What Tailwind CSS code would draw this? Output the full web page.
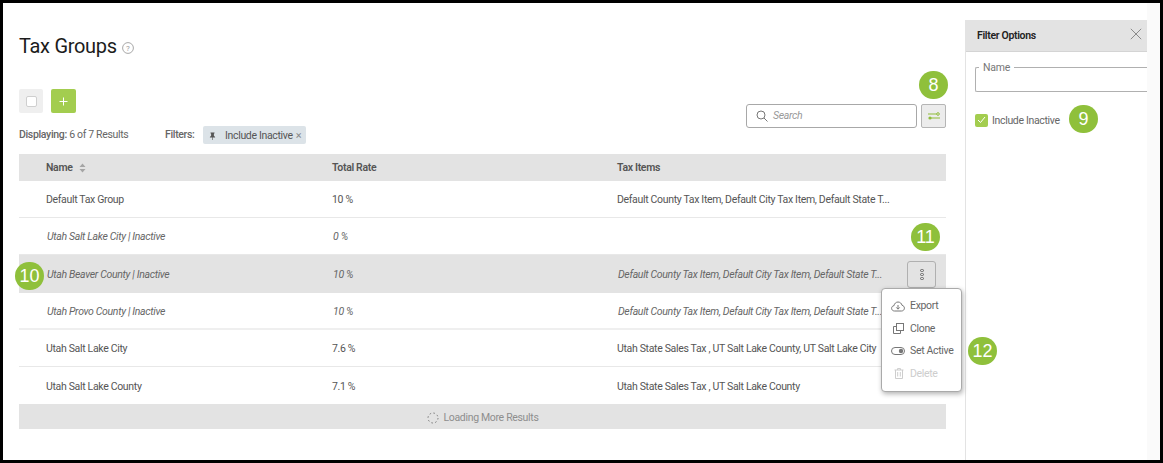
<!DOCTYPE html>
<html>
<head>
<meta charset="utf-8">
<script src="https://cdn.jsdelivr.net/npm/@tailwindcss/browser@4"></script>
</head>
<body class="m-0 bg-black font-['Roboto',sans-serif]">
<div class="relative w-[1163px] h-[463px] overflow-hidden bg-black pt-[3px] pl-[3px] pr-[3px] pb-[3px]">
  <div class="flex h-[457px] bg-white">
    <!-- main -->
    <div class="w-[962px] shrink-0 pl-[16px] pr-[19px]">
      <div class="flex items-center h-[28px] mt-[29px] gap-[5px]">
        <h1 class="text-[20px] leading-[28px] text-[#1c1c1c] tracking-[-0.3px]">Tax Groups</h1>
        <svg class="mt-[3px]" width="12" height="12" viewBox="0 0 12 12" fill="none"><circle cx="6" cy="6" r="5.4" stroke="#a8a8a8"/><text x="6" y="8.8" text-anchor="middle" font-size="8" fill="#999" font-family="Roboto">?</text></svg>
      </div>
      <div class="flex justify-between items-start mt-[29px]">
        <div>
          <div class="flex items-center gap-[8px]">
            <div class="w-[24px] h-[24px] rounded-[2px] bg-[#efefef] flex items-center justify-center"><div class="w-[11px] h-[11px] bg-white border border-[#cfcfcf] rounded-[2px]"></div></div>
            <div class="w-[25px] h-[24px] rounded-[2px] bg-[#a3cd4f] flex items-center justify-center">
              <svg width="9" height="9" viewBox="0 0 9 9"><path d="M4.5 0.5v8M0.5 4.5h8" stroke="#fff" stroke-width="1"/></svg>
            </div>
          </div>
          <div class="flex items-center h-[18px] mt-[13px] text-[10.5px] tracking-[-0.33px] text-[#666]">
            <span class="w-[146px]"><span class="font-medium">Displaying:</span> 6 of 7 Results</span>
            <span class="w-[38px] font-medium">Filters:</span>
            <span class="flex items-center h-[18px] w-[103px] pl-[6px] pt-[1px] rounded-[2px] bg-[#dce3e8] text-[#555]">
              <svg width="7" height="8" viewBox="0 0 7 8" class="mr-[9px]"><path d="M1.5 0.5h4v0.8l-0.6 0.4v2l1.2 1.2v0.6H3.8V8H3.2V5.5H0.9v-0.6l1.2-1.2v-2l-0.6-0.4z" fill="#555"/></svg>
              Include Inactive
              <span class="ml-[3px] text-[#888] text-[11px] leading-none">×</span>
            </span>
          </div>
        </div>
        <div class="flex gap-[4px] items-center mt-[15px]">
          <div class="flex items-center w-[171px] h-[24px] border border-[#a8a8a8] rounded-[3px] pl-[9px] text-[10.5px] tracking-[-0.33px] italic text-[#999] bg-white">
            <svg class="mr-[5px]" width="12" height="12" viewBox="0 0 12 12" fill="none"><circle cx="5" cy="5" r="4" stroke="#777"/><path d="M8 8l3.5 3.5" stroke="#777"/></svg>
            Search
          </div>
          <div class="w-[25px] h-[24px] border border-[#b5b5b5] rounded-[2px] bg-[#ececec] flex items-center justify-center">
            <svg width="12" height="8" viewBox="0 0 12 8" fill="none"><path d="M0 2h9" stroke="#8fbc3a"/><circle cx="10" cy="2" r="1.3" stroke="#8fbc3a" fill="#ececec"/><path d="M3 6h9" stroke="#8fbc3a"/><circle cx="2" cy="6" r="1.6" fill="#8fbc3a"/></svg>
          </div>
        </div>
      </div>
      <!-- table -->
      <div class="mt-[10px] text-[10.5px] tracking-[-0.33px] text-[#555]">
        <div class="flex items-center h-[27px] pt-[1px] bg-[#e3e3e3] font-semibold text-[#555]">
          <div class="w-[313px] pl-[27px] flex items-center gap-[6px]">Name
            <svg width="7" height="10" viewBox="0 0 7 10"><path d="M3.5 0.5L6.5 4H0.5zM3.5 9.5L0.5 6h6z" fill="#a5a5a5"/></svg>
          </div>
          <div class="w-[285px]">Total Rate</div>
          <div>Tax Items</div>
        </div>
        <div class="flex items-center h-[37px] pt-[1px] border-b border-[#e8e8e8]">
          <div class="w-[313px] pl-[27px]">Default Tax Group</div><div class="w-[285px]">10 %</div><div>Default County Tax Item, Default City Tax Item, Default State T...</div>
        </div>
        <div class="flex items-center h-[37px] pt-[1px] border-b border-[#e8e8e8] italic text-[#666]">
          <div class="w-[313px] pl-[28px]">Utah Salt Lake City | Inactive</div><div class="w-[285px] pl-[1px]">0 %</div><div></div>
        </div>
        <div class="flex items-center h-[38px] pt-[1px] bg-[#e3e3e3] italic text-[#666]">
          <div class="w-[313px] pl-[28px]">Utah Beaver County | Inactive</div><div class="w-[285px] pl-[1px]">10 %</div><div class="pl-[1px]">Default County Tax Item, Default City Tax Item, Default State T...</div>
        </div>
        <div class="flex items-center h-[37px] pt-[2px] border-b-2 border-[#efefef] italic text-[#666]">
          <div class="w-[313px] pl-[28px]">Utah Provo County | Inactive</div><div class="w-[285px] pl-[1px]">10 %</div><div class="pl-[1px]">Default County Tax Item, Default City Tax Item, Default State T...</div>
        </div>
        <div class="flex items-center h-[37px] pt-[2px] border-b border-[#e8e8e8]">
          <div class="w-[313px] pl-[27px]">Utah Salt Lake City</div><div class="w-[285px]">7.6 %</div><div>Utah State Sales Tax , UT Salt Lake County, UT Salt Lake City</div>
        </div>
        <div class="flex items-center h-[37px] pt-[2px]">
          <div class="w-[313px] pl-[27px]">Utah Salt Lake County</div><div class="w-[285px]">7.1 %</div><div>Utah State Sales Tax , UT Salt Lake County</div>
        </div>
        <div class="flex items-center justify-center gap-[5px] h-[25px] pt-[2px] bg-[#e3e3e3] text-[#8e8e8e] font-normal">
          <svg width="12" height="12" viewBox="0 0 12 12" fill="none"><circle cx="6" cy="6" r="5" stroke="#777" stroke-width="1" stroke-dasharray="1.5 2.4"/></svg>
          Loading More Results
        </div>
      </div>
    </div>
    <!-- filter panel -->
    <div class="w-[182px] shrink-0 border-l border-[#e3e3e3] ml-0 mt-[17px]">
      <div class="flex items-center justify-between h-[32px] bg-[#e3e3e3] border-b border-[#d4d4d4] pl-[11px] pr-[5px] text-[10.5px] tracking-[-0.33px] font-semibold text-[#222]">
        Filter Options
        <svg class="-mt-[3px]" width="12" height="12" viewBox="0 0 12 12"><path d="M0.8 0.8l10.4 10.4M11.2 0.8L0.8 11.2" stroke="#8a8a8a" stroke-width="1"/></svg>
      </div>
      <div class="relative ml-[9px] mt-[15px] h-[25px] border border-[#b0b0b0] border-r-0 rounded-l-[2px]">
        <span class="absolute left-[3px] -top-[6px] bg-white px-[4px] text-[10.5px] tracking-[-0.2px] leading-[12px] text-[#777]">Name</span>
      </div>
      <div class="flex items-center ml-[9px] mt-[21px] text-[10.5px] tracking-[-0.33px] text-[#666]">
        <div class="w-[13px] h-[13px] -mt-[1px] rounded-[2px] bg-[#a3cd4f] flex items-center justify-center mr-[4px]">
          <svg width="9" height="8" viewBox="0 0 9 8" fill="none"><path d="M1 4l2.5 2.5L8 1" stroke="#fff"/></svg>
        </div>
        Include Inactive
      </div>
    </div>
    <div class="flex-1 bg-[#fafafa]"></div>
  </div>

  <!-- row action button -->
  <div class="absolute left-[907px] top-[261px] w-[29px] h-[27px] border border-[#b0b0b0] rounded-[3px] flex flex-col items-center justify-center gap-[1px]">
    <span class="w-[4px] h-[3px] rounded-full border border-[#666]"></span>
    <span class="w-[4px] h-[3px] rounded-full border border-[#666]"></span>
    <span class="w-[4px] h-[3px] rounded-full border border-[#666]"></span>
  </div>

  <!-- context menu -->
  <div class="absolute left-[881px] top-[288px] w-[81px] h-[104px] bg-white border border-[#aaa] rounded-[4px] shadow-[1px_2px_5px_rgba(0,0,0,0.3)] text-[10.5px] tracking-[-0.33px] text-[#666] pt-[6px] pl-[9px]">
    <div class="flex items-center h-[22.5px]">
      <svg class="w-[14px] mr-[5px]" width="14" height="11" viewBox="0 0 14 11" fill="none"><path d="M3.5 10C1.8 10 .6 8.8.6 7.3c0-1.4 1-2.5 2.4-2.6C3.3 2.6 5 1 7 1c2 0 3.6 1.4 4 3.3 1.4.2 2.4 1.4 2.4 2.9 0 1.5-1.2 2.8-2.9 2.8z" stroke="#777"/><path d="M7 4v4M5.3 6.4L7 8.2l1.7-1.8" stroke="#777"/></svg>
      Export
    </div>
    <div class="flex items-center h-[22.5px]">
      <svg class="mr-[5px] ml-[1px]" width="13" height="11" viewBox="0 0 11 11" fill="none"><rect x="3.5" y="0.5" width="7" height="7" stroke="#777"/><path d="M3.5 3.5h-3v7h7v-3" stroke="#777"/></svg>
      Clone
    </div>
    <div class="flex items-center h-[22.5px]">
      <svg class="mr-[5px]" width="14" height="8" viewBox="0 0 14 8" fill="none"><rect x="0.5" y="0.5" width="13" height="7" rx="3.5" stroke="#777"/><circle cx="10" cy="4" r="2.2" fill="#777"/></svg>
      Set Active
    </div>
    <div class="flex items-center h-[22.5px] text-[#cdcdcd]">
      <svg class="mr-[6px] ml-[3px]" width="10" height="11" viewBox="0 0 10 11" fill="none"><path d="M.5 2h9M3.5 2V.6h3V2M1.5 2v8.5h7V2M3.7 4v4.5M6.3 4v4.5" stroke="#cdcdcd"/></svg>
      Delete
    </div>
  </div>

  <!-- callouts -->
  <div class="absolute left-[919px] top-[71px] w-[29px] h-[28px] rounded-full bg-[#8fc03b] text-white font-['Liberation_Sans',sans-serif] text-[18px] flex items-center justify-center">8</div>
  <div class="absolute left-[1069px] top-[105px] w-[29px] h-[28px] rounded-full bg-[#8fc03b] text-white font-['Liberation_Sans',sans-serif] text-[18px] flex items-center justify-center">9</div>
  <div class="absolute left-[15px] top-[262px] w-[29px] h-[28px] rounded-full bg-[#8fc03b] text-white font-['Liberation_Sans',sans-serif] text-[18px] flex items-center justify-center">10</div>
  <div class="absolute left-[911px] top-[223px] w-[29px] h-[28px] rounded-full bg-[#8fc03b] text-white font-['Liberation_Sans',sans-serif] text-[18px] flex items-center justify-center">11</div>
  <div class="absolute left-[968px] top-[337px] w-[29px] h-[28px] rounded-full bg-[#8fc03b] text-white font-['Liberation_Sans',sans-serif] text-[18px] flex items-center justify-center">12</div>
</div>
</body>
</html>
